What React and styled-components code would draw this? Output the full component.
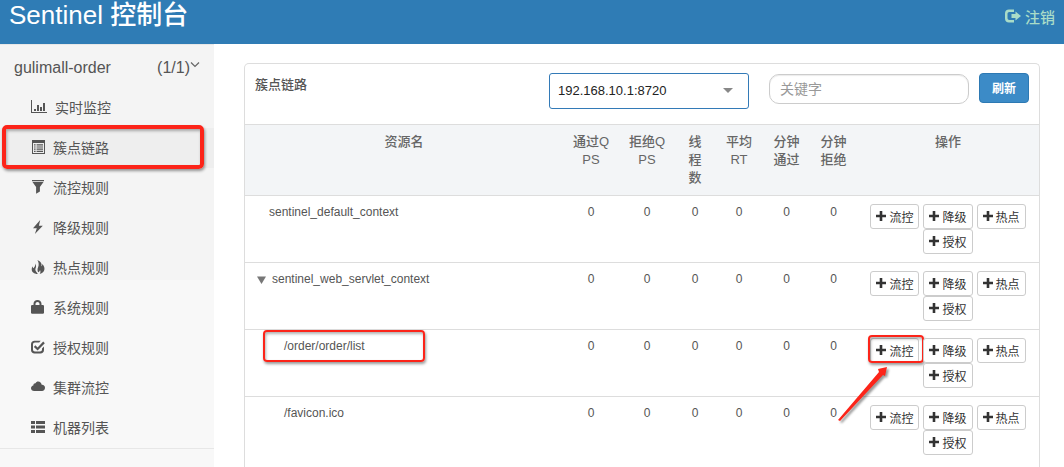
import React from "react";
import styled, { createGlobalStyle } from "styled-components";

const menuItems = [
	{ icon: "chart", label: "实时监控" },
	{ icon: "listAlt", label: "簇点链路", active: true },
	{ icon: "filter", label: "流控规则" },
	{ icon: "flash", label: "降级规则" },
	{ icon: "fire", label: "热点规则" },
	{ icon: "lock", label: "系统规则" },
	{ icon: "check", label: "授权规则" },
	{ icon: "cloud", label: "集群流控" },
	{ icon: "thList", label: "机器列表" },
];

// the name column takes whatever is left
const columns = [
	{ name: "资源名" },
	{ name: "通过QPS", width: 56 },
	{ name: "拒绝QPS", width: 56 },
	{ name: "线程数", width: 40 },
	{ name: "平均RT", width: 48 },
	{ name: "分钟通过", width: 47 },
	{ name: "分钟拒绝", width: 47 },
	{ name: "操作", width: 182 },
];

const resources = [
	{ name: "sentinel_default_context", indent: 24, stats: [0, 0, 0, 0, 0, 0] },
	{ name: "sentinel_web_servlet_context", indent: 12, open: true, stats: [0, 0, 0, 0, 0, 0] },
	{ name: "/order/order/list", indent: 39, marked: true, stats: [0, 0, 0, 0, 0, 0] },
	{ name: "/favicon.ico", indent: 39, stats: [0, 0, 0, 0, 0, 0] },
];

const actions = ["流控", "降级", "热点", "授权"];

const icons = {
	chart: {
		width: 16,
		body: <path d="M0 0h1v12h15v1H0zM3 9h2v2H3zM6 5h2v6H6zM9 7h2v4H9zM12 3h2v8h-2z" />,
	},
	listAlt: {
		body: (
			<path
				fillRule="evenodd"
				d="M1 0h13v14H1zM2 3v10h11V3zM3 4.2h1.6v1.2H3zM5.6 4.2H12v1.2H5.6zM3 6.4h1.6v1.2H3zM5.6 6.4H12v1.2H5.6zM3 8.6h1.6v1.2H3zM5.6 8.6H12v1.2H5.6zM3 10.8h1.6V12H3zM5.6 10.8H12V12H5.6z"
			/>
		),
	},
	filter: { body: <path d="M1 0h12v1.3H1zM1.5 2h11L8.900 7v4.600L5.100 13.800V7z" /> },
	flash: { body: <path d="M9.200 0 2 8.200h3.800L3.900 14 11.800 5.700H7.900z" /> },
	fire: {
		body: (
			<path d="M6.400 0c3.500 1.400 4.800 3.600 4 6.200.6-.3.900-1 .8-2.200 1.800 1.800 2.500 3.600 2.200 5.400-.3 2-1.800 3.700-4.700 4.600.9-1.500 1-2.700.3-4-.2 1.300-.9 2-1.900 2.300C6.400 10.600 6.300 9 7.100 7.200 8.100 4.800 7.800 2.400 6.400 0zM4.300 3.600c1 2 1 3.300.3 4.700-.5 1.300-.2 2.500.8 3.700.6.700 1 1.200 1.400 2C2.800 13.800.7 12 .7 9.200c0-1 .3-2 .9-3 .1 1.200.4 1.700.9 2C3.600 7.200 4.500 5.700 4.300 3.600z" />
		),
	},
	lock: {
		body: (
			<path
				fillRule="evenodd"
				d="M2.500 5V3.800C2.500 1.500 4.300 0 6.500 0s4 1.500 4 3.800V5h1.700l.8.800V13l-.8.800H.8L0 13V5.800L.8 5zM4.500 5h4V4c0-1.300-.8-2-2-2s-2 .7-2 2z"
			/>
		),
	},
	check: {
		body: (
			<path d="M9.700.8 8.200 2.400H4C2.800 2.400 2 3.200 2 4.400v5.200c0 1.200.8 2 2 2h5c1.200 0 2-.8 2-2V8.400l2-2V10c0 2-1.500 3.500-3.500 3.500h-6C1.500 13.500 0 12 0 10V4.200C0 2.200 1.500.7 3.500.7zM4.300 5.300l2.300 2.300L12.200 1.600l1.600 1.600-7.200 7.400L2.900 6.900z" />
		),
	},
	cloud: {
		body: <path d="M3.200 11C1.300 11 0 9.800 0 8.200c0-1.400 1-2.500 2.300-2.700C2.400 4 3.400 3.100 4.500 3.300 5.100 2 6 1.500 7.200 1.500c1.900 0 3.200 1.300 3.500 3.300C12.700 4.600 14 6 14 7.800c0 1.900-1.200 3.200-3 3.200z" />,
	},
	thList: {
		body: <path d="M0 1h4v3H0zM5 1h9v3H5zM0 5.500h4v3H0zM5 5.500h9v3H5zM0 10h4v3H0zM5 10h9v3H5z" />,
	},
	logout: {
		width: 16,
		body: <path d="M9 .5V3H4.500C3.200 3 2.500 3.700 2.500 5v4c0 1.300.7 2 2 2H9v2.500H4C1.500 13.500 0 12 0 9.500v-5C0 2 1.500.5 4 .5zM10.500 2.500 16 7l-5.500 4.500V9H6.500V5h4z" />,
	},
};

const Icon = ({ name }) => {
	const { width = 14, body } = icons[name];
	return (
		<StyledIcon width={width} height="14" viewBox={`0 0 ${width} 14`} aria-hidden="true">
			{body}
		</StyledIcon>
	);
};

const ActionButton = ({ label }) => (
	<StyledAction type="button">
		<StyledIcon width="10" height="10" viewBox="0 0 10 10" aria-hidden="true">
			<path d="M3.700 0h2.600v3.700H10v2.600H6.300V10H3.700V6.300H0V3.700h3.700z" />
		</StyledIcon>
		{label}
	</StyledAction>
);

const Arrow = () => (
	<StyledArrow width="56" height="62" viewBox="0 0 56 62" aria-hidden="true">
		<path d="M1 55 42 7l-1-3 9-2-2 9-2-1L3 56z" />
	</StyledArrow>
);

const Sidebar = () => (
	<StyledSidebar>
		<StyledAppRow href="#order">
			<span>gulimall-order</span>
			<StyledCount>
				(1/1)
				<svg width="10" height="6" viewBox="0 0 10 6" aria-hidden="true">
					<path d="M1 0.500 5 4.500 9 0.500" fill="none" stroke="#666" strokeWidth="1.200" />
				</svg>
			</StyledCount>
		</StyledAppRow>
		<StyledMenu>
			{menuItems.map((item) => (
				<StyledMenuItem key={item.label} $active={item.active}>
					<StyledMenuLink href={`#${item.icon}`}>
						<Icon name={item.icon} />
						{item.label}
					</StyledMenuLink>
					{item.active && <MenuMark />}
				</StyledMenuItem>
			))}
		</StyledMenu>
	</StyledSidebar>
);

const ResourceTable = () => (
	<StyledTable>
		<colgroup>
			{columns.map((col) => (
				<StyledCol key={col.name} $width={col.width} />
			))}
		</colgroup>
		<thead>
			<tr>
				{columns.map((col) => (
					<StyledTh key={col.name}>{col.name}</StyledTh>
				))}
			</tr>
		</thead>
		<tbody>
			{resources.map((row) => (
				<StyledRow key={row.name}>
					<StyledNameCell>
						<StyledName $indent={row.indent}>
							{row.open && (
								<StyledToggle type="button" aria-label="collapse">
									<svg width="9" height="8" viewBox="0 0 9 8">
										<path d="M0 0.500h9L4.500 8z" fill="#777" />
									</svg>
								</StyledToggle>
							)}
							{row.name}
						</StyledName>
						{row.marked && <NameMark />}
					</StyledNameCell>
					{row.stats.map((value, i) => (
						<StyledTd key={i}>{value}</StyledTd>
					))}
					<StyledTd>
						<StyledActions>
							{actions.map((label, i) => (
								<StyledActionSlot key={label}>
									<ActionButton label={label} />
									{row.marked && i === 0 && (
										<>
											<ButtonMark />
											<Arrow />
										</>
									)}
								</StyledActionSlot>
							))}
						</StyledActions>
					</StyledTd>
				</StyledRow>
			))}
		</tbody>
	</StyledTable>
);

const App = () => (
	<StyledPage>
		<GlobalStyle />
		<StyledHeader>
			<StyledBrand>Sentinel 控制台</StyledBrand>
			<StyledLogout href="#logout">
				<Icon name="logout" />
				注销
			</StyledLogout>
		</StyledHeader>
		<StyledBody>
			<Sidebar />
			<StyledMain>
				<StyledCard>
					<StyledToolbar>
						<StyledCardTitle>簇点链路</StyledCardTitle>
						<StyledSelectBox>
							<StyledSelect aria-label="机器">
								<option>192.168.10.1:8720</option>
							</StyledSelect>
							<StyledCaret width="10" height="5" viewBox="0 0 10 5" aria-hidden="true">
								<path d="M0 0h10L5 5z" />
							</StyledCaret>
						</StyledSelectBox>
						<StyledSearch type="text" placeholder="关键字" aria-label="关键字" />
						<StyledRefresh type="button">刷新</StyledRefresh>
					</StyledToolbar>
					<ResourceTable />
				</StyledCard>
			</StyledMain>
		</StyledBody>
	</StyledPage>
);

export default App;

const GlobalStyle = createGlobalStyle`
	* {
		box-sizing: border-box;
	}
	body {
		margin: 0;
		background: #fff;
		color: #333;
		font-family: "Liberation Sans", "Noto Sans CJK SC", sans-serif;
		font-size: 13px;
	}
	button, input, select {
		font-family: inherit;
	}
`;

const StyledPage = styled.div`
	display: flex;
	flex-direction: column;
	min-height: 100vh;
`;

const StyledHeader = styled.header`
	display: flex;
	justify-content: space-between;
	height: 44px;
	padding: 0 9px;
	background: #2f7cb5;
`;

const StyledBrand = styled.h1`
	margin: 0;
	color: #fff;
	font-size: 26px;
	font-weight: 500;
	line-height: 30px;
`;

const StyledLogout = styled.a`
	display: flex;
	align-items: center;
	gap: 4px;
	height: 34px;
	padding-bottom: 2px;
	color: #a9dcc8;
	font-size: 15px;
	font-weight: 500;
	text-decoration: none;
`;

const StyledBody = styled.div`
	display: flex;
	flex: 1;
`;

const StyledSidebar = styled.nav`
	flex: none;
	width: 214px;
	padding-top: 3px;
	border-top: 1px solid #e7e7e7;
	background: linear-gradient(#f4f4f4 235px, #f8f8f8 235px);
`;

const StyledAppRow = styled.a`
	display: flex;
	align-items: center;
	justify-content: space-between;
	height: 40px;
	padding: 0 14px;
	color: #555;
	font-size: 16px;
	text-decoration: none;
`;

const StyledCount = styled.span`
	display: flex;
	align-items: center;

	svg {
		margin-bottom: 6px;
	}
`;

const StyledMenu = styled.ul`
	margin: 0;
	padding: 0;
	list-style: none;
	border-bottom: 1px solid #e7e7e7;
`;

const StyledMenuItem = styled.li`
	position: relative;
	background: ${(props) => (props.$active ? "#eee" : "transparent")};
`;

const StyledMenuLink = styled.a`
	display: flex;
	align-items: center;
	gap: 8px;
	height: 40px;
	padding: 0 0 2px 31px;
	color: #555;
	font-size: 14px;
	text-decoration: none;
`;

const StyledIcon = styled.svg`
	flex: none;
	fill: currentColor;
`;

// red frames drawn over the page
const Mark = styled.span`
	position: absolute;
	border: 2px solid #fc2419;
	border-radius: 4px;
	box-shadow: 1px 2px 3px rgba(0, 0, 0, 0.4), inset 1px 2px 3px rgba(0, 0, 0, 0.3);
	pointer-events: none;
`;

const MenuMark = styled(Mark)`
	top: -3px;
	right: 10px;
	bottom: -1px;
	left: 2px;
	border-width: 4px;
	border-radius: 5px;
`;

const NameMark = styled(Mark)`
	top: 0;
	left: 18px;
	width: 162px;
	height: 32px;
`;

const ButtonMark = styled(Mark)`
	top: -3px;
	right: -5px;
	bottom: 0;
	left: -2px;
`;

const StyledArrow = styled.svg`
	position: absolute;
	top: 27px;
	left: -33px;
	fill: #fc2419;
	filter: drop-shadow(2px 2px 1px rgba(0, 0, 0, 0.4));
	pointer-events: none;
`;

const StyledMain = styled.main`
	display: flex;
	flex: 1;
	min-width: 0;
	padding: 19px 24px 0 30px;
`;

const StyledCard = styled.section`
	flex: 1;
	min-width: 0;
	border: 1px solid #ddd;
	border-bottom: 0;
	border-radius: 5px 5px 0 0;
`;

const StyledToolbar = styled.div`
	display: flex;
	align-items: flex-start;
	height: 60px;
	padding: 9px 10px 0;
`;

const StyledCardTitle = styled.h2`
	flex: 1;
	margin: 0;
	color: #555;
	font-size: 13px;
	font-weight: 500;
	line-height: 24px;
`;

const StyledSelectBox = styled.div`
	position: relative;
	width: 200px;
	margin-right: 20px;
`;

const StyledSelect = styled.select`
	display: block;
	width: 100%;
	height: 36px;
	padding: 0 30px 2px 8px;
	border: 1px solid #337ab7;
	border-radius: 3px;
	background: #fff;
	color: #222;
	font-size: 13px;
	appearance: none;
`;

const StyledCaret = styled.svg`
	position: absolute;
	top: 15px;
	right: 16px;
	fill: #888;
	pointer-events: none;
`;

const StyledSearch = styled.input`
	width: 200px;
	height: 30px;
	margin: 1px 10px 0 0;
	padding: 0 10px;
	border: 1px solid #ccc;
	border-radius: 10px;
	box-shadow: inset 0 1px 1px rgba(0, 0, 0, 0.08);
	font-size: 14px;

	&::placeholder {
		color: #999;
	}
`;

const StyledRefresh = styled.button`
	width: 50px;
	height: 30px;
	padding: 0 0 2px;
	border: 1px solid #2d79b3;
	border-radius: 4px;
	background: #3c8bc7;
	color: #fff;
	font-size: 12px;
	font-weight: 700;
`;

const StyledTable = styled.table`
	width: 100%;
	table-layout: fixed;
	border-collapse: collapse;
	color: #555;
`;

const StyledCol = styled.col`
	width: ${(props) => (props.$width ? `${props.$width}px` : "auto")};
`;

const StyledTh = styled.th`
	padding: 8px;
	border: solid #ddd;
	border-width: 1px 0;
	background: #f3f5f7;
	color: #666;
	font-size: 13px;
	font-weight: 500;
	line-height: 18px;
	text-align: center;
	vertical-align: top;
	word-break: break-all;
`;

const StyledRow = styled.tr`
	border-bottom: 1px solid #ddd;

	&:last-child {
		border-bottom: 0;
	}
`;

const StyledTd = styled.td`
	padding: 8px;
	font-size: 12px;
	line-height: 16px;
	text-align: center;
	vertical-align: top;
`;

const StyledNameCell = styled(StyledTd)`
	position: relative;
	padding-left: 0;
	text-align: left;
`;

const StyledName = styled.div`
	display: flex;
	align-items: center;
	gap: 6px;
	padding-left: ${(props) => props.$indent}px;
`;

const StyledToggle = styled.button`
	display: flex;
	padding: 2px 0 0;
	border: 0;
	background: none;
`;

const StyledActions = styled.div`
	display: flex;
	flex-wrap: wrap;
	justify-content: center;
	column-gap: 4px;
`;

const StyledActionSlot = styled.span`
	position: relative;
`;

const StyledAction = styled.button`
	display: flex;
	align-items: center;
	gap: 3px;
	height: 25px;
	padding: 0 5px 1px;
	border: 1px solid #ccc;
	border-radius: 3px;
	background: #fff;
	color: #333;
	font-size: 12px;
`;
